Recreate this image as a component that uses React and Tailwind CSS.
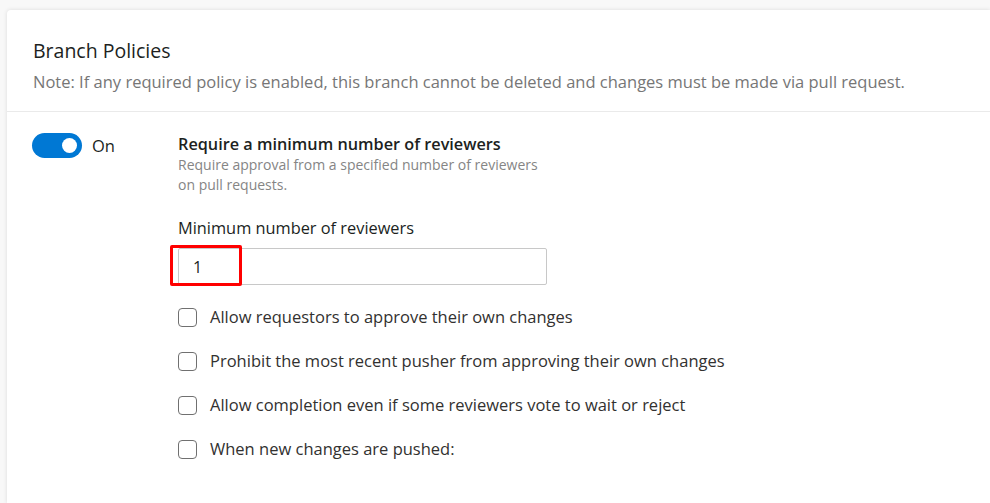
import React, { useState } from "react";

const options = [
  "Allow requestors to approve their own changes",
  "Prohibit the most recent pusher from approving their own changes",
  "Allow completion even if some reviewers vote to wait or reject",
  "When new changes are pushed:",
];

export default function App() {
  const [enabled, setEnabled] = useState(true);
  const [count, setCount] = useState("1");
  const [checked, setChecked] = useState([false, false, false, false]);

  return (
    <div
      className="min-h-screen bg-[#f8f8f8] pt-[10px] pl-[7px] overflow-hidden"
      style={{ fontFamily: '"Open Sans", "Noto Sans", sans-serif' }}
    >
      <div className="bg-white rounded-tl-[4px] shadow-[0_0_4px_rgba(0,0,0,0.12)] min-h-[493px]">
        {/* header */}
        <div className="pl-[26px] pt-[28px] pb-[18px] border-b border-[#eaeaea]">
          <h1 className="text-[19.5px] leading-[26px] text-[#201f1e]">Branch Policies</h1>
          <p className="text-[16.5px] leading-[22px] mt-[7px] text-[#767676]">
            Note: If any required policy is enabled, this branch cannot be deleted and changes must be made via pull request.
          </p>
        </div>

        {/* policy */}
        <div className="flex pl-[25px] pt-[21px]">
          <div className="w-[146px] flex items-start">
            <button
              onClick={() => setEnabled(!enabled)}
              className={`w-[50px] h-[25px] rounded-full flex items-center px-[5px] ${
                enabled ? "bg-[#0078d4] justify-end" : "bg-white border border-gray-500 justify-start"
              }`}
            >
              <span className={`w-[15px] h-[15px] rounded-full ${enabled ? "bg-white" : "bg-gray-600"}`} />
            </button>
            <span className="ml-[10px] text-[16.5px] leading-[25px] text-[#201f1e]">{enabled ? "On" : "Off"}</span>
          </div>

          <div className="flex-1">
            <div className="text-[16.25px] leading-[22px] font-semibold text-[#201f1e]">
              Require a minimum number of reviewers
            </div>
            <p className="text-[14px] leading-[20px] text-[#858585] max-w-[375px]">
              Require approval from a specified number of reviewers on pull requests.
            </p>

            <label className="block mt-[22px] text-[16.35px] leading-[22px] text-[#201f1e]">
              Minimum number of reviewers
            </label>
            <div className="relative mt-[9px] w-[369px]">
              <input
                value={count}
                onChange={(e) => setCount(e.target.value)}
                className="w-full h-[37px] border border-[#c8c8c8] rounded-[2px] pl-[14px] text-[16px] text-[#201f1e] outline-none"
              />
              {/* red highlight */}
              <div className="absolute left-[-8px] top-[-3px] w-[72px] h-[41px] border-[3px] border-[#ff0000] rounded-[2px] pointer-events-none" />
            </div>

            <div className="mt-[23px] flex flex-col gap-[25px]">
              {options.map((text, i) => (
                <label key={i} className="flex items-center h-[19px] cursor-pointer">
                  <span
                    onClick={() => setChecked(checked.map((c, j) => (j === i ? !c : c)))}
                    className={`w-[19px] h-[19px] rounded-[4px] border border-[#707070] ${
                      checked[i] ? "bg-[#0078d4] border-[#0078d4]" : "bg-white"
                    }`}
                  />
                  <span className="ml-[13px] text-[16.5px] text-[#323130]">{text}</span>
                </label>
              ))}
            </div>
          </div>
        </div>
      </div>
    </div>
  );
}
